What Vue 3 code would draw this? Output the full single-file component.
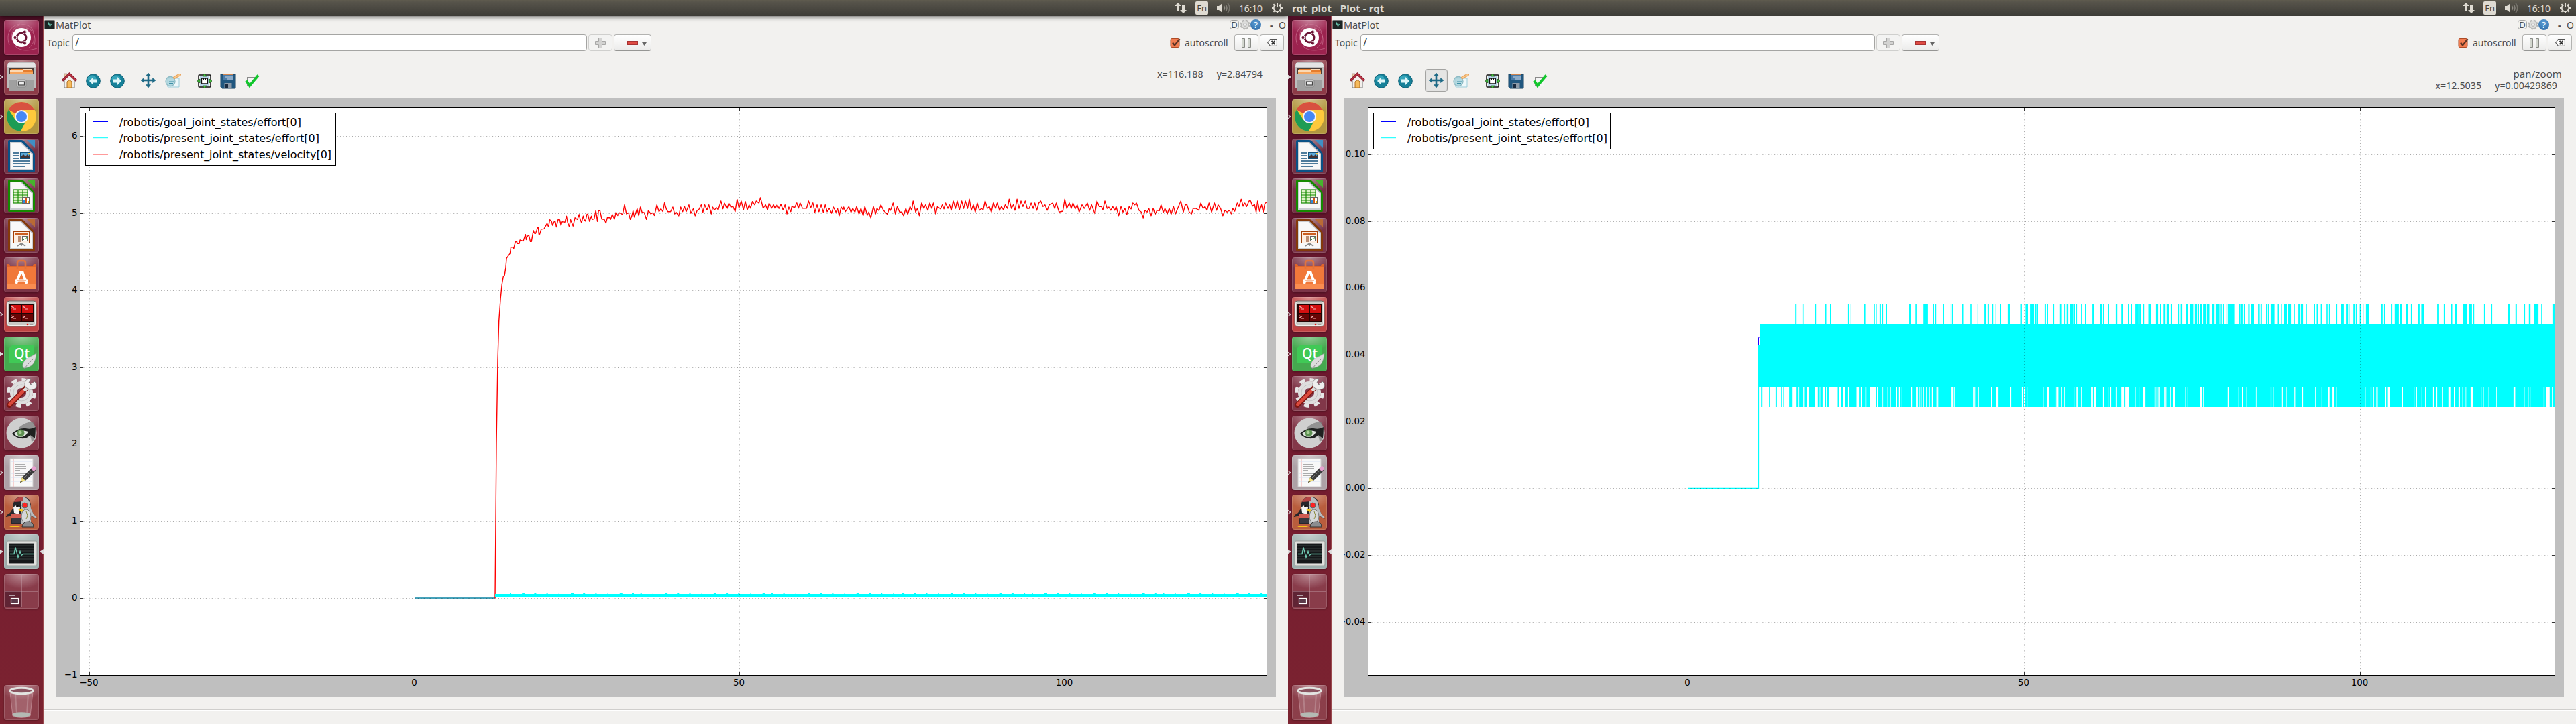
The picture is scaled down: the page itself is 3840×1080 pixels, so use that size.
<script setup>
const runs = (s, origin, scale) =>
  s.trim().split(/\s+/).map((r) => {
    const [a, b] = r.split('-').map(Number)
    return [origin + a / scale, origin + b / scale]
  })

const points = (s, ox, sx, oy, sy) =>
  s.trim().split(/\s+/).map((p) => {
    const [u, v] = p.split(',').map(Number)
    return (ox + u / sx).toFixed(1) + ',' + (oy + v / sy).toFixed(1)
  }).join(' ')

const bars = (list, top, height) =>
  list.map(([a, b]) => `M${a.toFixed(1)} ${top}H${b.toFixed(1)}v${height}H${a.toFixed(1)}z`).join('')

const rise = points(`289,1477 294,920 299,620 303,480 309,400 314,348 319,320 324,314 328,288 331,254 336,247 344,236 347,214 356,214 357,220 363,195 369,195 370,201 377,201 380,188 392,192 400,168 403,187 406,176 412,170 418,194 422,194 429,154 433,164 437,165 445,142 447,142 449,167 452,167 458,149 468,148 479,128 484,140 489,115 495,120 499,135 505,122 509,122 513,141 519,115 525,115 530,135 534,122 544,124 550,102 554,124 560,140 565,115 574,138 581,108 590,114 596,96 600,114 605,126 611,102 615,115 619,120 625,95 628,95 634,121 641,102 644,114 651,112 657,82 663,121 667,83 672,82 679,113 688,114 694,127 699,108 708,108 711,114 717,96 725,113 731,88 737,100 743,90 755,96 762,62 769,94 777,90 783,114 788,104 793,83 798,106 808,76 814,100 820,70 826,88 834,90 842,114 849,82 858,94 865,90 871,100 880,62 888,86 895,76 902,86 908,55 915,78 920,86 930,86 938,70 945,94 950,88 960,101 967,70 974,86 981,68 987,86 997,62 1004,92 1013,76 1020,101 1027,82 1034,78 1042,62 1048,88 1055,62 1063,80 1070,62 1079,94 1084,70 1090,80 1098,72 1104,80 1114,48 1121,76 1127,56 1136,76 1143,56 1150,70 1158,68 1166,86 1173,42 1180,74 1188,48 1196,80 1203,50 1210,80 1217,62 1222,74 1229,50 1237,62 1243,48 1253,56 1258,36 1268,74 1277,62 1284,80 1290,56 1299,74 1306,62 1312,75 1319,62 1326,75 1333,60 1341,80 1348,62 1355,94 1362,70 1369,86 1373,68 1383,72 1391,55 1397,74 1403,55 1412,74 1427,74 1434,48 1442,72 1450,55 1457,88 1465,62 1472,86 1480,62 1488,88 1495,62 1502,86 1510,74 1518,92 1525,70 1534,88 1540,76 1546,101 1553,70 1560,80`, 620, 2.45, 280, 2.412)
const steady = points(`42,72 48,92 60,70 68,95 74,78 82,94 88,70 96,102 103,78 111,110 117,70 126,108 131,94 138,120 147,70 155,102 160,78 167,88 174,62 183,86 197,104 203,78 208,86 217,54 225,102 232,70 240,94 248,94 254,110 262,78 269,104 277,70 283,86 288,45 297,94 303,78 310,110 318,54 326,78 332,62 340,86 347,54 354,78 360,54 368,102 374,70 385,80 391,62 397,80 403,54 411,78 417,62 423,86 430,45 438,78 444,45 452,84 460,45 467,78 473,45 481,78 487,37 494,86 501,62 508,94 515,54 523,86 530,78 536,84 543,45 551,78 558,70 565,94 572,54 580,78 586,54 594,86 601,70 608,84 614,62 622,78 628,37 636,78 643,62 649,86 656,37 663,78 670,45 677,70 685,45 692,78 699,78 706,54 713,78 719,54 726,86 733,54 740,45 748,70 755,62 763,86 770,62 782,54 789,78 795,54 805,94 818,90 825,37 832,78 841,54 848,78 854,54 862,80 869,62 876,94 886,62 894,78 905,54 913,86 920,62 932,102 939,45 947,70 955,70 960,84 967,45 975,78 981,72 988,86 995,70 1002,86 1007,70 1016,110 1024,70 1031,94 1038,78 1045,104 1053,70 1060,80 1066,54 1073,62 1079,54 1088,86 1096,94 1103,120 1109,86 1117,94 1123,78 1131,110 1138,78 1145,104 1152,86 1160,88 1166,62 1174,95 1180,78 1188,102 1195,78 1202,103 1210,70 1217,102 1225,78 1236,45 1245,94 1252,62 1258,62 1266,94 1274,102 1280,78 1290,78 1300,86 1307,54 1315,78 1322,70 1329,86 1336,54 1345,94 1355,54 1363,86 1368,62 1377,78 1385,110 1392,86 1400,94 1408,86 1415,102 1420,78 1427,90 1436,54 1442,70 1450,37 1457,68 1463,54 1469,70 1478,44 1483,44 1490,68 1497,60 1503,94 1508,45 1515,90 1522,62 1528,94 1534,56 1540,50`, 1240, 2.376, 285, 3)
const velocity = rise + ' ' + steady

const peaks = bars([
  ...runs(`218-223 245-249 291-296 298-301 331-335 349-354 417-421 427-430 478-482 514-518 521-525 536-541 544-549 559-564 647-655 671-675 701-706 708-718 737-741 744-749 776-779 804-807 809-812 847-851 878-882 905-908 931-936 943-948 960-964 973-976 991-994 1019-1027 1066-1072 1086-1095 1103-1118 1123-1127 1130-1133 1158-1163 1167-1171 1189-1194 1216-1223 1232-1237 1241-1247 1252-1266 1269-1272 1275-1280 1295-1300 1310-1315 1338-1343 1368-1374 1378-1381 1397-1401 1426-1432 1447-1452 1472-1477 1482-1487 1500-1505 1507-1512 1515-1522 1528-1533 1549-1558`, 670, 2.529),
  ...runs(`7-15 34-38 39-42 49-54 62-69 73-83 88-93 113-118 124-130 143-150 157-170 176-184 186-191 196-201 206-216 220-229 240-248 252-266 267-270 271-274 279-282 289-292 296-320 336-342 345-350 355-360 371-376 382-392 407-413 416-421 436-441 443-448 453-467 479-483 491-495 502-512 517-527 537-541 554-560 563-571 581-585 610-615 621-625 636-640 657-661 666-670 691-696 710-720 728-735 737-741 755-760 764-769 778-782 789-792 801-813 857-862 867-871 892-897 906-921 926-931 946-953 965-970 990-997 1003-1013 1061-1068 1085-1090 1110-1116 1127-1132 1156-1169 1178-1188 1192-1196 1232-1237 1257-1262 1318-1328 1347-1352 1377-1382 1396-1402 1414-1431 1441-1444 1482-1490`, 1280, 2.45)
], 453, 31)

const dips = bars(runs(`89-94 119-124 144-149 165-169 173-177 195-208 223-228 233-248 250-252 255-263 268-293 303-310 312-321 330-334 339-344 378-382 392-397 407-417 420-449 458-465 469-482 486-500 521-526 531-547 549-564 565-567 569-577 579-599 602-609 612-619 622-655 658-673 680-684 687-690 694-701 703-711 713-723 725-733 736-750 753-754 757-807 812-816 819-888 890-893 895-897 899-908 910-956 959-967 968-976 984-989 991-1028 1032-1072 1075-1080 1084-1090 1093-1154 1155-1168 1176-1201 1203-1206 1210-1222 1224-1232 1234-1267 1270-1278 1282-1295 1297-1333 1340-1343 1351-1378 1381-1396 1399-1404 1409-1426 1431-1447 1457-1462 1477-1498 1501-1513 1515-1530 1538-1557 1560-1563 1565-1568`, 670, 2.529), 577, 30)

const gaps = bars(runs(`15-17 29-33 36-38 41-43 47-49 64-66 69-72 86-88 98-103 120-121 140-141 149-152 196-201 206-208 246-247 296-299 335-336 348-352 364-365 387-388 399-401 424-425 453-456 463-464 492-497 509-511 538-541 543-545 568-571 615-617 626-627 639-642 664-668 679-684 691-692 701-702 768-769 799-800 818-821 828-830 833-835 839-844 872-875 881-887 902-904 932-936 976-978 985-987 1004-1007 1017-1021 1046-1049 1058-1061 1078-1080 1102-1109 1122-1125 1139-1144 1147-1149 1153-1154 1165-1167 1176-1178 1183-1193 1221-1223 1231-1232 1248-1249 1277-1279 1340-1346 1380-1381 1395-1396 1400-1402 1450-1453 1460-1472 1480-1482`, 1280, 2.45), 577, 31)

const fringe = Array.from({ length: 190 }, (_, i) => {
  const x = 760 + i * 5.9 + ((i * 37) % 11) / 2
  return `M${x.toFixed(1)} ${i % 3 ? 890.5 : 885.5}h${1 + ((i * 13) % 4)}`
}).join('')

const effort = { name: '/robotis/present_joint_states/effort[0]', color: '#00ffff', width: 298 }
const goal = { name: '/robotis/goal_joint_states/effort[0]', color: '#0000ff', width: 271 }
const screens = [
  {
    id: 'left', title: '', mode: '', coords: ['x=116.188', 'y=2.84794'], filled: ['qt', 'monitor'],
    legend: [goal, effort, { name: '/robotis/present_joint_states/velocity[0]', color: '#ff0000', width: 316 }],
    legendBox: [373, 78],
    xs: [[133.5, '−50'], [618.5, '0'], [1102.5, '50'], [1587.5, '100']],
    ys: [[203.5, '6'], [318.5, '5'], [433.5, '4'], [548.5, '3'], [662.5, '2'], [777.5, '1'], [892.5, '0'], [1007.5, '−1']]
  },
  {
    id: 'right', title: 'rqt_plot__Plot - rqt', mode: 'pan/zoom', coords: ['x=12.5035', 'y=0.00429869'], filled: ['files', 'monitor'],
    legend: [goal, effort],
    legendBox: [353, 54],
    xs: [[596.5, '0'], [1097.5, '50'], [1598.5, '100']],
    ys: [[230.5, '0.10'], [330.5, '0.08'], [429.5, '0.06'], [529.5, '0.04'], [629.5, '0.02'], [728.5, '0.00'], [828.5, '−0.02'], [928.5, '−0.04']]
  }
]

const apps = ['dash', 'files', 'chrome', 'writer', 'calc', 'impress', 'software', 'terminator', 'qt', 'settings', 'eye', 'gedit', 'robot', 'monitor', 'workspaces', 'trash']
const running = ['files', 'chrome', 'terminator', 'qt', 'gedit', 'robot', 'monitor']
const office = {
  writer: ['#0a5287', '#3f8fc4'],
  calc: ['#158a00', '#45b52c'],
  impress: ['#843a0b', '#b96a35']
}
</script>

<template>
  <main class="desktop">
    <section v-for="s in screens" :key="s.id" class="screen" :class="s.id">
      <header class="panel">
        <span class="title">{{ s.title }}</span>
        <div class="tray">
          <svg class="net" width="18" height="18" viewBox="0 0 18 18"><path fill="#dfdbd2" d="M5 1l5 5H7v8H3V6H0zM13 17l-5-5h3V5h4v7h3z" /></svg>
          <span class="lang">En</span>
          <svg class="vol" width="21" height="18" viewBox="0 0 21 18"><path fill="#dfdbd2" d="M0 6h3l5-4v14l-5-4H0z" /><g fill="none" stroke-width="1.6"><path stroke="#918e86" d="M10.5 6q2 3 0 6" /><path stroke="#85827a" d="M13 4q4 5 0 10" /><path stroke="#77746c" d="M16 1.500q5.500 7.500 0 15" /></g></svg>
          <span class="clock">16:10</span>
          <svg class="power" width="18" height="18" viewBox="0 0 18 18"><g fill="none" stroke="#dfdbd2"><path stroke-width="2" d="M6.300 4.400a5.300 5.300 0 1 0 5.400 0" /><path stroke-width="2" d="M9 1v7" /><path stroke-width="2.200" d="M1 9h3M14 9h3M9 14v3M3.300 3.300l2 2M14.700 3.300l-2 2M3.300 14.700l2-2M14.700 14.700l-2-2" /></g></svg>
        </div>
      </header>

      <div class="body">
        <nav class="launcher">
          <div v-for="a in apps" :key="a" class="tile" :class="a">
            <svg v-if="running.includes(a)" class="pip" width="6" height="8" viewBox="0 0 6 8"><path d="M-1 .8L4 4-1 7.200" :fill="s.filled.includes(a) ? '#ddd' : 'none'" stroke="#ddd" stroke-width="1.100" /></svg>
            <svg v-if="a === 'monitor'" class="pip end" width="6" height="8" viewBox="0 0 6 8"><path d="M6 0v8L0 4z" fill="#ddd" /></svg>
            <svg class="glyph" width="52" height="52" viewBox="0 0 52 52">
              <g v-if="a === 'dash'">
                <g fill="none" stroke="#d98ba6" stroke-opacity=".55"><path d="M12 30C8 14 22 3 35 8S48 34 37 41" /><path d="M8 37C2 20 10 8 24 6" /><path d="M16 38c8 10 24 7 33 4" /><path d="M33 12c12 2 15 15 12 25" /></g>
                <circle cx="26" cy="26" r="14" fill="#fff" /><circle cx="26" cy="26" r="7" fill="none" stroke="#6b1535" stroke-width="3" />
                <g fill="#6b1535" stroke="#fff"><circle cx="16.500" cy="26" r="2.600" /><circle cx="30.800" cy="17.700" r="2.600" /><circle cx="30.800" cy="34.300" r="2.600" /></g>
              </g>
              <g v-else-if="a === 'files'">
                <path d="M5 9q0-4 3-5h36q3 1 3 5v34H5z" fill="#bdbdbd" /><path d="M6 5h40l1 6H5z" fill="#e4e4e4" /><path d="M8 12h36v12H8z" fill="#4a3d38" />
                <path d="M9 17l2-3h30l2 3v6H9z" fill="#e57c2c" /><path d="M9 16h18l2-2h13v1H30l-2 3H9z" fill="#fbd9b4" /><path d="M9 19h34v4H9z" fill="#f6a55d" />
                <path d="M7 22h38v21q0 4-3 4H10q-3 0-3-4z" fill="#a0a0a0" /><path d="M7 22h38v8H7z" fill="#bbb" /><rect x="19" y="30" width="14" height="11" rx="2" fill="#c9c9c9" stroke="#8a8a8a" /><rect x="21.500" y="33" width="9" height="5" fill="#eee" stroke="#444" stroke-width="1.200" />
              </g>
              <g v-else-if="a === 'chrome'">
                <circle cx="26" cy="26" r="22" fill="#fcc934" /><path d="M26 26L6.500 15.500A22 22 0 0 1 45.500 16z" fill="#d85140" /><path d="M26 16h20L41 12 26 6z" fill="#d85140" />
                <path d="M26 26l8.500 5L25 48A22 22 0 0 1 6.900 15.200L17 31z" fill="#1d9c55" /><path d="M34 30L25 48c20 0 26-18 20.500-32H28z" fill="#fdc93c" />
                <circle cx="26" cy="26" r="10" fill="#f5f5f5" /><circle cx="26" cy="26" r="8" fill="#4688f4" />
              </g>
              <g v-else-if="office[a]">
                <path d="M8 2h18q2 0 4 2l14 15q2 2 2 5v24q0 2-2 2H8q-2 0-2-2V4q0-2 2-2z" :fill="office[a][0]" /><path d="M34 2h12v12z" :fill="office[a][1]" />
                <path d="M9 5h17l17 17v25H9z" fill="#c9ccd0" /><path d="M10.500 6h14L41 22v23H10.500z" fill="#f8f8f8" /><path d="M26 5v1l15 16h2z" fill="#aab" />
                <g v-if="a === 'writer'"><path stroke="#14527c" stroke-width="1.600" d="M14 21h8M14 25h8M14 29h8M14 33h24M14 37h24M14 41h18" /><rect x="24.500" y="20.500" width="13" height="9" fill="#5ba9d8" stroke="#14527c" /><path d="M25 29v-2l4-4 3 3 3-3 3 4v2z" fill="#433" /><path d="M35 21h3v3z" fill="#fc4" /></g>
                <g v-else-if="a === 'calc'"><rect x="14" y="17" width="21" height="20" fill="#dff2c8" stroke="#158a00" stroke-width="1.200" /><path fill="none" stroke="#158a00" stroke-width="1.200" d="M14 21h21M14 25h21M14 29h21M14 33h21M21 17v20M28 17v20" /><rect x="27.500" y="28.500" width="10" height="9" fill="#fff" stroke="#666" /><path d="M29 37v-4h2v4z" fill="#2a8fe0" /><path d="M32 37v-7h2v7z" fill="#d55a1a" /><path d="M35 37v-3h2v3z" fill="#f2b600" /></g>
                <g v-else><rect x="14.500" y="20.500" width="23" height="17" fill="#fdeee2" stroke="#a3410a" /><path stroke="#cc5f20" stroke-width="2" d="M17 24h18" /><path stroke="#7a2d05" stroke-width="1.800" d="M21 28.500h5M21 31.500h5M21 34.500h5" /><path stroke="#cc8c60" d="M17 28.500h2M17 31.500h2M17 34.500h2" /><rect x="27.500" y="27.500" width="7" height="7" fill="#fff" stroke="#666" /><path fill="none" stroke="#3a9a2e" d="M29 33l2-2 1 1 2-3" /><path fill="none" stroke="#888" stroke-width="1.600" d="M26 38l-6 4M26 38l6 4M26 38v4" /></g>
              </g>
              <g v-else-if="a === 'software'">
                <path d="M5 10h3l1 3h34l1-3h3v37H5z" fill="#e0642a" /><path d="M5 14h42v33H5z" fill="#f0783a" /><path d="M5 40h42v7H5z" fill="#f98c50" /><path d="M20 17V8q0-3 3-3h6q3 0 3 3v9" fill="none" stroke="#e0733e" stroke-width="2.600" />
                <path d="M18 39l6.500-17h3L34 39" fill="none" stroke="#fff" stroke-width="3.800" /><path d="M17 34h18" stroke="#fff" stroke-width="3.200" /><path d="M19 34h14" stroke="#f0783a" />
              </g>
              <g v-else-if="a === 'terminator'">
                <rect x="4" y="6" width="44" height="38" rx="4" fill="#c8c8c4" stroke="#70706c" /><rect x="5.500" y="7.500" width="41" height="35" rx="3" fill="none" stroke="#f1f1ee" /><rect x="8" y="10" width="36" height="28" rx="1" fill="#220505" />
                <path d="M10 12h16v12H10zM27 12h16v12H27z" fill="#d31010" /><path d="M10 26h16v10H10zM27 26h16v10H27z" fill="#680505" />
                <path d="M11 14l3 1.500-3 1.500M14 18h4M28 14l3 1.500-3 1.500M31 18h4M11 28l3 1.500-3 1.500M14 32h4M28 28l3 1.500-3 1.500M31 32h4" fill="none" stroke="#f6b5b5" stroke-width="1.200" /><circle cx="35" cy="41" r="1.300" fill="#e11" /><path d="M38 41h5" stroke="#777" />
              </g>
              <g v-else-if="a === 'qt'">
                <path d="M13 12h31v28H8V17z" fill="#40c956" /><text x="15" y="33" class="qttext" textLength="23" lengthAdjust="spacingAndGlyphs">Qt</text><path d="M48 25c-1 14-6 21-18 22-4-2-2-9 3-13 4-4 10-5 15-9z" fill="#dcdcdc" stroke="#999" stroke-width=".6" /><path d="M30 48q7-9 15-16" stroke="#888" fill="none" />
              </g>
              <g v-else-if="a === 'settings'">
                <circle cx="26" cy="25" r="19.500" fill="none" stroke="#e6e6e6" stroke-width="5" stroke-dasharray="8 7.300" /><circle cx="26" cy="25" r="12" fill="none" stroke="#dedede" stroke-width="10" /><circle cx="26" cy="25" r="12" fill="none" stroke="#bbb" stroke-width=".8" />
                <path d="M8 43L34 17" stroke="#7d1712" stroke-width="8" stroke-linecap="round" /><path d="M8.500 42L28 23" stroke="#db4a3d" stroke-width="5" stroke-linecap="round" /><path d="M30 22l6-6" stroke="#ddd" stroke-width="5" /><path d="M45 8l-5 5-3-3 3-6q-8-1-9 7t9 9 8-9z" fill="#eee" stroke="#777" stroke-width=".8" />
              </g>
              <g v-else-if="a === 'eye'">
                <circle cx="26" cy="26" r="22.500" fill="#cfcfcf" /><path d="M22 18q10-9 22-9l4 14-3 14-4 2q-1-17-19-19z" fill="#777" opacity=".7" /><path d="M12 27q9-9 20-8 9 2 15-2l-1 17-7-5q-5 6-13 5-9-1-14-7z" fill="#1f2120" />
                <path d="M15 27q8-7 21-3-4 8-11 8-6 0-10-5z" fill="#dfe5df" /><circle cx="25" cy="26" r="5.500" fill="#5d9152" /><circle cx="24" cy="25" r="2.500" fill="#a6cc94" />
              </g>
              <g v-else-if="a === 'gedit'">
                <path d="M9 5h34v42H9z" fill="#f8f8f8" stroke="#ccc" /><path d="M14 5v42" stroke="#f3aaaa" /><path d="M10 9h32M10 27h32M10 33h32M10 39h32" stroke="#d5e2f4" /><path stroke="#999" d="M16 13.500h16M16 16.500h17M16 19.500h17M16 22.500h8M16 27.500h17M16 30.500h16M16 35.500h10M16 38.500h14M16 41.500h8" stroke-width=".8" />
                <path d="M24 41l3-8 16-16 5 5-16 16z" fill="#3d3d3d" /><path d="M30 34l14-14" stroke="#777" /><path d="M24 41l3-8 5 5z" fill="#f0e080" /><path d="M24 41l1.500-3 1.500 1.500z" fill="#222" /><path d="M40 20l4-4q3 0 4 5l-4 3z" fill="#e7a0cf" />
              </g>
              <g v-else-if="a === 'robot'">
                <path d="M13 21Q13 3 27 3t13 18l4 8q6 5 4 7l-8-5v12H10l2-12-9 2q-1-2 6-6z" fill="#26262b" /><path d="M26 3q13 0 14 18l4 8q6 5 4 6l-8-4v12H26z" fill="#b9bcbe" /><path d="M15 11q4-9 14-8l-1 7z" fill="#b54444" />
                <path d="M14 19q5-6 10 0l-2 10-7-2z" fill="#f5f5f5" /><circle cx="20" cy="17" r="2" fill="#111" /><circle cx="31" cy="16" r="4" fill="#f22" stroke="#666" /><path d="M20 21h6l4 3-4 2z" fill="#f5c518" />
                <path d="M10 29h17v5H10z" fill="#d05b52" /><path d="M12 34h14v8H12z" fill="#37373f" /><ellipse cx="33" cy="32" rx="7" ry="10" fill="#d5d7d8" stroke="#777" /><path d="M33 25l2 6-2 5" fill="none" stroke="#8a8a3c" /><path d="M8 48q5-4 17 0z" fill="#f5c518" /><path d="M27 48q1-8 9-8t8 8z" fill="#8b8d90" stroke="#333" />
              </g>
              <g v-else-if="a === 'monitor'">
                <rect x="4" y="10" width="45" height="37" rx="2" fill="#dfe0dd" stroke="#9b9e9b" /><rect x="7.500" y="13.500" width="37" height="30" fill="#15181a" stroke="#888" /><path d="M8 17h36M8 21h36M8 25h36M8 33h36M8 37h36" stroke="#39403f" /><path d="M9 29.500h6l2-10 4 15 3-9 2 6 3-2h15" fill="none" stroke="#72cdb5" stroke-width="1.400" />
              </g>
              <g v-else-if="a === 'workspaces'">
                <path d="M2 26h24v24H4q-2 0-2-2z" fill="#4a1728" opacity=".65" /><path d="M26 2v48M2 26h48" stroke="#c9a9b3" stroke-opacity=".8" /><rect x="7.500" y="32.500" width="9" height="8" fill="none" stroke="#b5a3ab" /><rect x="10.500" y="36.500" width="11" height="8" fill="#5b3a4a" stroke="#fff" stroke-width="1.200" />
              </g>
              <g v-else>
                <path d="M9 10h34l-4 36q-13 5-26 0z" fill="#d7b2bb" fill-opacity=".3" stroke="#d6a5ae" stroke-opacity=".6" /><path d="M36 12l-2 32M17 12l2 32" stroke="#fff" stroke-opacity=".2" stroke-width="2" /><ellipse cx="26" cy="44" rx="13.500" ry="3.800" fill="#b4bab4" /><ellipse cx="26" cy="8.500" rx="17" ry="4.300" fill="#8a5460" stroke="#e2e4e1" stroke-width="3" />
              </g>
            </svg>
          </div>
        </nav>

        <div class="window">
          <div class="dock">
            <svg width="16" height="14" viewBox="0 0 16 14"><rect x=".5" y=".5" width="15" height="13" rx="1" fill="#1c2424" stroke="#777" /><path d="M1.500 7.500h4l1-3 2 5 1.500-3 1 1h3.500" fill="none" stroke="#6cc7b0" stroke-width="1.200" /></svg>
            <span class="name">MatPlot</span>
            <span class="dbtn">D</span>
            <svg class="cog" width="16" height="16" viewBox="0 0 16 16"><circle cx="8" cy="8" r="6.300" fill="none" stroke="#b9b9b7" stroke-width="2.400" stroke-dasharray="2.800 2.150" /><circle cx="8" cy="8" r="5.700" fill="#dededc" stroke="#b8b8b6" /><circle cx="8" cy="8" r="2.300" fill="#eee" stroke="#aaa" /></svg>
            <span class="help">?</span>
            <span class="min">-</span>
            <span class="max">O</span>
          </div>

          <div class="controls">
            <span class="topic">Topic</span>
            <div class="field">/</div>
            <div class="btn add"><svg width="16" height="16" viewBox="0 0 16 16"><path d="M5.500.5h5v5h5v5h-5v5h-5v-5h-5v-5h5z" fill="#d3d3d2" stroke="#a7a7a6" /></svg></div>
            <div class="btn remove"><svg width="16" height="6" viewBox="0 0 16 6"><rect x=".5" y=".5" width="15" height="5" fill="#df4b43" stroke="#a83232" /><path d="M1.500 1.500h13" stroke="#ef8c85" /></svg><svg class="drop" width="7" height="5" viewBox="0 0 7 5"><path d="M0 0h7L3.500 5z" fill="#666" /></svg></div>
            <svg class="check" width="16" height="16" viewBox="0 0 16 16"><rect x="1" y="1.500" width="13" height="13" rx="2" fill="#f27d51" stroke="#ad4c27" /><path d="M4 7.500l3 4L14.500 2" fill="none" stroke="#5d3324" stroke-width="2.200" /></svg>
            <span class="auto">autoscroll</span>
            <div class="btn pause"><svg width="14" height="14" viewBox="0 0 14 14"><path d="M.5.5h4v13h-4zM9.500.5h4v13h-4z" fill="#d3d7cf" stroke="#888a85" /></svg></div>
            <div class="btn clear"><svg width="15" height="11" viewBox="0 0 15 11"><path d="M4.500.6h9.900v9.800H4.500L.7 5.500z" fill="#fff" stroke="#555" stroke-width="1.100" /><path d="M6.500 3l5 5M11.500 3l-5 5" stroke="#333" stroke-width="2" /></svg></div>
          </div>

          <div class="toolbar">
            <svg class="home" width="23" height="24" viewBox="0 0 23 24"><path d="M4 2h4v6H4z" fill="#e9c9a0" stroke="#a88" stroke-width=".7" /><path d="M4 11l7.500-8L19 11v12H4z" fill="#f3efec" stroke="#777" /><path d="M1 12.500L11.500 2.500 22 12.500" fill="none" stroke="#8c1d2c" stroke-width="3.600" /><path d="M2 11.500L11.500 2.500 21 11.500" fill="none" stroke="#c43748" stroke-width="1.500" /><path d="M8 23v-9q3.500-4 7 0v9z" fill="#f6bb5d" stroke="#b06f22" /></svg>
            <svg class="back" width="22" height="22" viewBox="0 0 22 22"><circle cx="11" cy="11" r="10.300" fill="#168199" stroke="#0d5f74" /><ellipse cx="9" cy="7.500" rx="6.500" ry="5" fill="#45b7c9" opacity=".7" /><path d="M5 11l6-6v3.500h6v5h-6V17z" fill="#dff6f8" /></svg>
            <svg class="fwd" width="22" height="22" viewBox="0 0 22 22"><circle cx="11" cy="11" r="10.300" fill="#168199" stroke="#0d5f74" /><ellipse cx="9" cy="7.500" rx="6.500" ry="5" fill="#45b7c9" opacity=".7" /><path d="M17 11l-6-6v3.500H5v5h6V17z" fill="#dff6f8" /></svg>
            <i class="sep"></i>
            <div class="pan"><svg width="22" height="22" viewBox="0 0 22 22"><path d="M11 0l3.500 4.500H12V10h5.500V7.500L22 11l-4.500 3.500V12H12v5.500h2.500L11 22l-3.500-4.500H10V12H4.500v2.500L0 11l4.500-3.500V10H10V4.500H7.500z" fill="#1e6a86" stroke="#1e6a86" stroke-width=".6" /></svg></div>
            <svg class="zoom" width="24" height="22" viewBox="0 0 24 22"><path d="M4 7h17v13H4z" fill="#eef8fa" stroke="#9bcdda" /><circle cx="8" cy="11.500" r="7" fill="#a9d3dc" fill-opacity=".85" stroke="#8dbac4" stroke-width="1.300" /><path d="M6 9.500h7M6 12h7M6 14.500h6" stroke="#3d8fa5" stroke-width="1.200" /><path d="M14 6l8-4.500" stroke="#e9a057" stroke-width="3.800" stroke-linecap="round" /><path d="M14 6l8-4.500" stroke="#f9cc90" stroke-width="1.500" /></svg>
            <i class="sep"></i>
            <svg class="sub" width="22" height="22" viewBox="0 0 22 22"><rect x="2" y="2" width="18" height="18" rx="1" fill="#f5f5f5" stroke="#111" stroke-width="1.500" /><path d="M4 4h14v14H4z" fill="#b7d4e7" /><rect x="6.500" y="7" width="9" height="8" rx="1" fill="#fff" stroke="#111" stroke-width="1.300" /><path d="M7 9.500h8M9.500 7v2.500M12.500 7v2.500" stroke="#111" /><path d="M11 0l3 4H8zM11 22l3-4H8zM0 11l4-3v6zM22 11l-4-3v6z" fill="#45c23e" stroke="#145c10" stroke-width=".7" /></svg>
            <svg class="save" width="24" height="23" viewBox="0 0 24 23"><path d="M1 1h22v21H3l-2-2z" fill="#21577f" stroke="#17405e" /><path d="M4 0h16v10H4z" fill="#4a7ba8" /><path d="M4 0h16v2H4z" fill="#d2854d" /><path d="M8 5h11M10 8h9" stroke="#cfdce9" /><path d="M6.500 14h11v8h-11z" fill="#8d9aa8" /><path d="M8 15h4v6H8z" fill="#1a2a3f" /></svg>
            <svg class="opts" width="22" height="22" viewBox="0 0 22 22"><rect x="3.500" y="5.500" width="13" height="13" fill="#f6f6f6" stroke="#8a8a8a" /><path d="M2 10.500l5 7.500L20 2.500" fill="none" stroke="#12c62c" stroke-width="4" /></svg>
            <div class="readout">
              <div v-if="s.mode" class="mode">{{ s.mode }}</div>
              <div class="xy"><span>{{ s.coords[0] }}</span><span>{{ s.coords[1] }}</span></div>
            </div>
          </div>

          <svg class="figure" width="1819" height="894" viewBox="83 146 1819 894">
            <rect x="83" y="146" width="1819" height="894" fill="#bfbfbf" />
            <rect x="119" y="160" width="1770" height="848" fill="#fff" />
            <g v-if="s.id === 'left'">
              <path d="M618 892h120" stroke="#46a3bb" stroke-width="1.800" />
              <path d="M738.500 892v-5" stroke="#0ff" />
              <polyline :points="velocity" fill="none" stroke="#f00" stroke-width="1.400" stroke-linejoin="round" />
              <path d="M738 886h1150v4H738z" fill="#0ff" /><path :d="fringe" stroke="#0ff" />
            </g>
            <g v-else fill="#0ff">
              <path d="M596 728.500h105.500V514" fill="none" stroke="#0ff" stroke-width="1.300" />
              <path d="M701 514h2v-31h1185v94H701z" />
              <path :d="peaks" /><path :d="dips" /><path d="M1280 576.500h608v30.500h-608z" /><path :d="gaps" fill="#fff" />
              <path d="M702.500 503.500h-1V514" fill="none" stroke="#20f" />
            </g>
            <g stroke="#000" stroke-opacity=".36" stroke-dasharray="1 3.450">
              <path v-for="x in s.xs" :key="x[1]" :d="`M${x[0]} 1007V161`" />
              <path v-for="y in s.ys" :key="y[1]" :d="`M120 ${y[0]}H1888`" />
            </g>
            <g stroke="#333">
              <path v-for="x in s.xs" :key="x[1]" :d="`M${x[0]} 161v4M${x[0]} 1007v-4`" />
              <path v-for="y in s.ys" :key="y[1]" :d="`M120 ${y[0]}h4M1888 ${y[0]}h-4`" />
            </g>
            <rect x="119.500" y="160.500" width="1769" height="847" fill="none" stroke="#000" />
            <g class="ticks">
              <text v-for="x in s.xs" :key="x[1]" :x="x[0] - 1" y="1023" text-anchor="middle">{{ x[1] }}</text>
              <text v-for="y in s.ys" :key="y[1]" x="115.500" :y="y[0] + 3.500" text-anchor="end">{{ y[1] }}</text>
            </g>
            <rect x="127.500" y="168.500" :width="s.legendBox[0]" :height="s.legendBox[1]" fill="#fff" stroke="#000" />
            <g v-for="(l, i) in s.legend" :key="l.name" class="key">
              <path :d="`M138 ${181.500 + i * 24.200}h23`" :stroke="l.color" />
              <text x="178" :y="187.500 + i * 24.200" :textLength="l.width" lengthAdjust="spacingAndGlyphs">{{ l.name }}</text>
            </g>
          </svg>
          <div class="status"></div>
        </div>
      </div>
    </section>
  </main>
</template>

<style>
body { margin: 0; overflow: hidden; }
</style>

<style scoped>
.desktop { display: flex; width: 3840px; height: 1080px; font-family: "Noto Sans", "Open Sans", sans-serif; font-size: 14px; color: #4c4c4c; background: #f2f1ef; }
.screen { width: 1920px; height: 1080px; display: flex; flex-direction: column; }
.panel { height: 24px; flex: none; display: flex; align-items: center; justify-content: space-between; background: linear-gradient(#5f5b4e, #56534a 15%, #3d3c37); color: #dfdbd2; position: relative; z-index: 2; }
.left .panel { box-shadow: 0 1px 7px rgba(0, 0, 0, .65); }
.title { margin-left: 6px; font-weight: 700; font-size: 15px; line-height: 22px; letter-spacing: .1px; white-space: pre; }
.tray { display: flex; align-items: center; width: 169px; height: 24px; }
.lang { margin-left: 13px; width: 19px; height: 20px; line-height: 20px; border-radius: 2px; background: #dfdbd2; color: #45433d; text-align: center; font-size: 13px; letter-spacing: -.5px; }
.vol { margin-left: 13px; }
.clock { margin-left: 12px; width: 36px; font-size: 14px; letter-spacing: -.2px; white-space: nowrap; }
.power { margin-left: 12px; }
.body { flex: 1; display: flex; }
.launcher { box-sizing: border-box; width: 65px; height: 1056px; padding: 6px 0 6px 6px; display: flex; flex-direction: column; gap: 7px; background: linear-gradient(#520f27, #64152c 30%, #761d30 70%, #7b2330); border-right: 1px solid #9a4a4e; }
.tile { position: relative; width: 52px; height: 52px; flex: none; border-radius: 4px; background: radial-gradient(ellipse 34px 22px at 50% 0, rgba(255, 255, 255, .42), transparent), rgba(255, 255, 255, .13); box-shadow: inset 0 0 0 1px rgba(255, 255, 255, .16), 0 1px 3px rgba(0, 0, 0, .3); }
.tile.trash { margin-top: auto; }
.glyph { display: block; }
.pip { position: absolute; left: -6px; top: 22px; }
.pip.end { left: 53px; }
.dash { background-color: #9c234f; }
.files { background-color: #8d3a47; }
.chrome { background-color: #b2973f; }
.terminator { background-color: #c04343; }
.qt { background-color: #45a94f; }
.gedit { background-color: #ada1a6; }
.robot { background-color: #b95d3d; }
.monitor { background-color: #9caead; }
.qttext { font: 500 22px "Noto Sans", sans-serif; fill: #fff; }
.window { width: 1855px; height: 1056px; display: flex; flex-direction: column; background: #f2f1ef; }
.dock { height: 26px; display: flex; align-items: center; padding-left: 1px; }
.name { margin-left: 1px; letter-spacing: -.1px; font-size: 14.500px; }
.dbtn { margin-left: auto; box-sizing: border-box; width: 14px; height: 14px; line-height: 12px; border: 1px solid #a8a8a6; border-radius: 4px; text-align: center; font-size: 13px; }
.cog { margin-left: 1px; }
.help { width: 16px; height: 16px; line-height: 16px; border-radius: 8px; background: radial-gradient(circle at 50% 30%, #5ca0d8, #2a65a0); color: #fff; text-align: center; font-size: 13px; }
.min { margin-left: 13px; width: 13px; font-weight: 700; }
.max { width: 14px; font-size: 14px; }
.controls { height: 27px; display: flex; align-items: center; padding-left: 5px; }
.topic { width: 38px; font-size: 14px; letter-spacing: -.1px; }
.field { box-sizing: border-box; width: 767px; height: 25px; line-height: 23px; padding-left: 3px; border: 1px solid #a5a5a3; border-radius: 4px; background: #fff; font-size: 16px; color: #3c3c3c; }
.btn { box-sizing: border-box; height: 25px; display: flex; align-items: center; justify-content: center; border: 1px solid #b3b3b1; border-bottom-color: #969694; border-radius: 4px; background: linear-gradient(#fff, #ebebea); }
.add { width: 36px; margin-left: 2px; border-color: #cfcfcd; background: #f3f3f2; }
.remove { width: 56px; margin-left: 2px; justify-content: flex-start; padding-left: 19px; }
.drop { margin: 3px 0 0 6px; }
.check { margin-left: auto; }
.auto { margin-left: 6px; width: 74px; font-size: 14px; }
.pause { width: 36px; }
.clear { width: 36px; margin: 0 6px 0 2px; }
.toolbar { height: 69px; display: flex; align-items: flex-start; padding-left: 27px; }
.toolbar > svg { margin-top: 33px; flex: none; }
.toolbar > .home { margin-top: 31px; }
.back { margin-left: 13px; }
.fwd { margin-left: 14px; }
.sep { width: 1px; height: 24px; margin: 31px 0 0 12px; background: #d2d2d0; }
.pan { box-sizing: border-box; width: 34px; height: 34px; margin: 26px 0 0 5px; display: flex; align-items: center; justify-content: center; border-radius: 4px; }
.right .pan { border: 1px solid #a3a3a1; background: #e5e5e4; box-shadow: inset 0 0 2px #bbb; }
.zoom { margin-left: 8px; }
.zoom + .sep { margin-left: 11px; }
.sub { margin-left: 12px; }
.save { margin-left: 12px; }
.opts { margin-left: 13px; }
.readout { margin: 25px 0 0 auto; padding-right: 21px; line-height: 17px; font-size: 14.300px; }
.mode { text-align: right; font-size: 15px; letter-spacing: .1px; }
.xy { display: flex; gap: 20px; padding-right: 17px; }
.right .xy { padding-right: 7px; }
.figure { display: block; flex: none; margin-left: 18px; }
.ticks { font: 13.330px "DejaVu Sans", sans-serif; fill: #000; }
.key text { font: 16px "DejaVu Sans", sans-serif; fill: #000; }
.status { margin-top: 18px; height: 21px; border-top: 1px solid #cfcecc; box-shadow: inset 0 1px #fff; }
</style>
